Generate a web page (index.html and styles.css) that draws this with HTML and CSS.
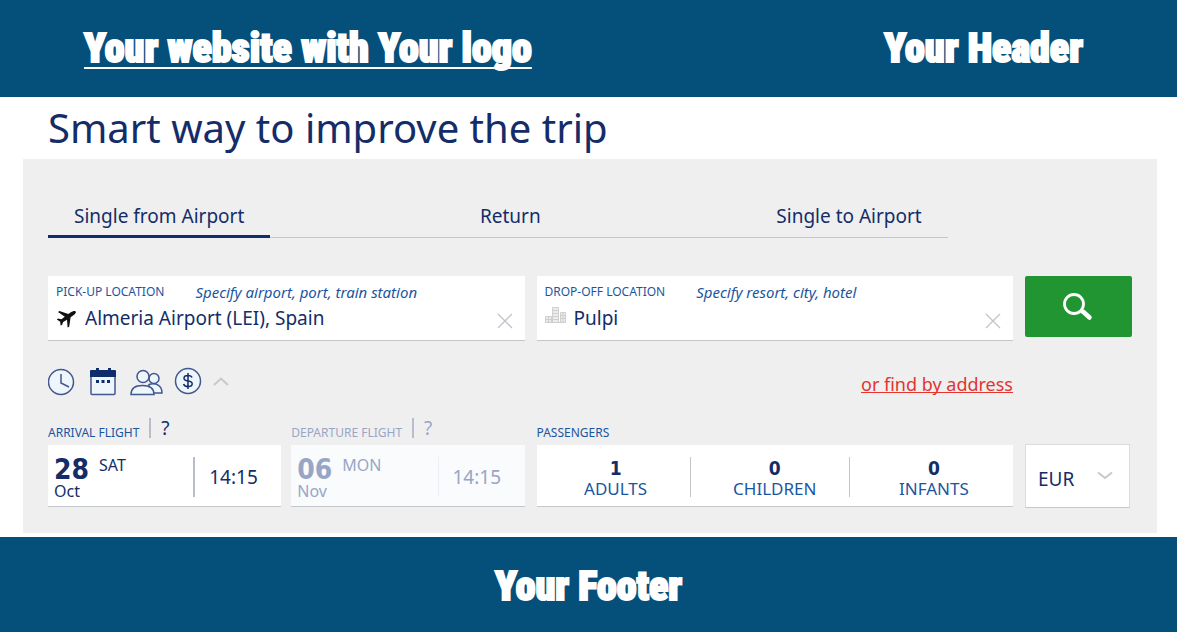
FILE: index.html
```html
<!DOCTYPE html>
<html lang="en">

<head>
    <meta charset="utf-8">
    <meta name="viewport" content="width=device-width, initial-scale=1.0">
    <title>Smart way to improve the trip</title>
    <link rel="stylesheet" href="styles.css">
</head>

<body>
    <header class="site-header">
        <a href="#" class="brand">Your website with Your logo</a>
        <span class="brand">Your Header</span>
    </header>

    <main>
        <h1>Smart way to improve the trip</h1>

        <form class="search">
            <!-- Trip type -->
            <div class="tabs">
                <button type="button" class="tab active">Single from Airport</button>
                <button type="button" class="tab">Return</button>
                <button type="button" class="tab">Single to Airport</button>
            </div>

            <!-- Locations -->
            <div class="row">
                <div class="field">
                    <div class="field-head">
                        <label for="pickup" class="caption">PICK-UP LOCATION</label>
                        <span class="hint">Specify airport, port, train station</span>
                    </div>
                    <div class="field-body">
                        <svg class="place" width="22" height="20" viewBox="0 0 22 20">
                            <path fill="#111" d="M19.500 3.200C18.300 2.400 16.500 3.200 14.900 4.300L12.300 6 3.500 3 2 4 8.800 8.700 5.400 11.300 2 10.500.800 11.500 4.200 13.700 4.600 17.500 6 17 7.200 14 11 11.800 11.600 19.500 13.200 18.800 14.600 9.300 17.800 7C19.500 5.800 20.500 4.200 19.500 3.200Z" />
                        </svg>
                        <input type="text" id="pickup" value="Almeria Airport (LEI), Spain">
                        <button type="button" class="clear" aria-label="Clear">
                            <svg width="16" height="16" viewBox="0 0 16 16">
                                <path stroke="#bfc4ca" stroke-width="1.300" d="M1 1 15 15M15 1 1 15" />
                            </svg>
                        </button>
                    </div>
                </div>

                <div class="field">
                    <div class="field-head">
                        <label for="dropoff" class="caption">DROP-OFF LOCATION</label>
                        <span class="hint">Specify resort, city, hotel</span>
                    </div>
                    <div class="field-body">
                        <svg class="place" width="22" height="20" viewBox="0 0 22 20">
                            <path fill="#ececec" stroke="#cfcfcf" d="M.500 8.500h6v6h-6zM7.500-.500h6v15h-6zM15.500 4.500h5v10h-5z" />
                            <path stroke="#cfcfcf" d="M1 11.500h5M3.500 9v5M8 2.500h5M8 5.500h5M8 8.500h5M8 11.500h5M16 7.500h4M16 10.500h4M18 5v9M0 14.500h21" />
                        </svg>
                        <input type="text" id="dropoff" value="Pulpi">
                        <button type="button" class="clear" aria-label="Clear">
                            <svg width="16" height="16" viewBox="0 0 16 16">
                                <path stroke="#bfc4ca" stroke-width="1.300" d="M1 1 15 15M15 1 1 15" />
                            </svg>
                        </button>
                    </div>
                </div>

                <button type="submit" class="go" aria-label="Search">
                    <svg width="32" height="28" viewBox="0 0 32 28" fill="none" stroke="#fff">
                        <circle cx="11" cy="11" r="9.500" stroke-width="2.800" />
                        <path stroke-width="4.500" stroke-linecap="round" d="M20.500 19 26.500 24.500" />
                        <path stroke-width="2.800" d="M17 17 20 20" />
                    </svg>
                </button>
            </div>

            <!-- Details toggle and address link -->
            <div class="row tools">
                <button type="button" class="details" aria-label="Details">
                    <svg width="184" height="30" viewBox="0 0 184 30" fill="none" stroke="#41578e" stroke-width="1.500">
                        <circle cx="13" cy="15" r="12.500" fill="#eef5fb" />
                        <path d="M13 7v9l8 4" />
                        <path fill="#eef5fb" d="M43 5h24v21.500q0 1-1 1h-22q-1 0-1-1z" />
                        <path fill="#0f2d6b" stroke="none" d="M42 4q0-1 1-1h5V1h3v2h9V1h3v2h4q1 0 1 1v6H42zM48 13h3v3h-3zM53.500 13h3v3h-3zM59 13h3v3h-3z" />
                        <g fill="#eef5fb">
                            <path d="M101 17.500c7-2 13 1 13 8.500h-13z" />
                            <circle cx="106" cy="11.500" r="5" />
                            <path d="M83 27.500c0-6 4-9 11.500-9s11.500 3 11.500 9z" />
                            <circle cx="95" cy="9.500" r="6" />
                            <circle cx="140" cy="14" r="12.500" />
                        </g>
                        <path stroke="#0f2d6b" d="M144 10.500c-.500-1.500-2-2-4-2-2.500 0-4 1-4 2.700 0 4 8.200 1.500 8.200 5.500 0 1.800-1.700 2.800-4.200 2.800-2.400 0-4-.800-4.400-2.500M140 6v16" />
                        <path stroke="#c8c8c8" stroke-width="2" d="M166 18 173 11.500 180 18" />
                    </svg>
                </button>
                <a href="#" class="address">or find by address</a>
            </div>

            <!-- Dates, passengers, currency -->
            <div class="row">
                <div class="flights">
                    <div>
                        <div class="legend">
                            <span class="caption">ARRIVAL FLIGHT</span>
                            <button type="button" class="help">?</button>
                        </div>
                        <div class="box">
                            <button type="button" class="date">
                                <b>28</b><span>SAT</span>
                                <span class="month">Oct</span>
                            </button>
                            <input type="text" class="time" value="14:15" aria-label="Arrival time">
                        </div>
                    </div>
                    <div class="off">
                        <div class="legend">
                            <span class="caption">DEPARTURE FLIGHT</span>
                            <button type="button" class="help">?</button>
                        </div>
                        <div class="box">
                            <button type="button" class="date" disabled>
                                <b>06</b><span>MON</span>
                                <span class="month">Nov</span>
                            </button>
                            <input type="text" class="time" value="14:15" aria-label="Departure time" disabled>
                        </div>
                    </div>
                </div>

                <div>
                    <div class="legend">
                        <span class="caption">PASSENGERS</span>
                    </div>
                    <div class="box">
                        <div class="count">
                            <input type="text" id="adults" value="1">
                            <label for="adults">ADULTS</label>
                        </div>
                        <div class="count">
                            <input type="text" id="children" value="0">
                            <label for="children">CHILDREN</label>
                        </div>
                        <div class="count">
                            <input type="text" id="infants" value="0">
                            <label for="infants">INFANTS</label>
                        </div>
                    </div>
                </div>

                <div class="currency">
                    <select aria-label="Currency">
                        <option>EUR</option>
                        <option>USD</option>
                        <option>GBP</option>
                    </select>
                    <svg width="18" height="10" viewBox="0 0 18 10" fill="none">
                        <path stroke="#c8c8c8" stroke-width="2" d="M2 1.500 9 7 16 1.500" />
                    </svg>
                </div>
            </div>
        </form>
    </main>

    <footer class="site-footer">
        <span class="brand">Your Footer</span>
    </footer>
</body>

</html>
```

FILE: styles.css
```css
* {
    box-sizing: border-box;
}

body {
    margin: 0;
    background-color: #fff;
    color: #142d69;
    font-family: Tahoma, "Noto Sans", sans-serif;
    font-size: 19px;
}

button,
input,
select {
    margin: 0;
    padding: 0;
    border: none;
    border-radius: 0;
    background: none;
    color: inherit;
    font: inherit;
}

button {
    cursor: pointer;
}

svg {
    display: block;
    flex: none;
}

/* HEADER AND FOOTER */

.site-header,
.site-footer {
    display: flex;
    align-items: center;
    background-color: #054f7b;
}

.site-header {
    justify-content: space-between;
    height: 97px;
    padding: 0 94px 0 84px;
}

.site-footer {
    justify-content: center;
    height: 95px;
    margin-top: 4px;
    padding-top: 5px;
}

.brand {
    color: #fff;
    font-family: Impact, "Roboto Condensed", "Liberation Sans", sans-serif;
    font-size: 40px;
    font-weight: 900;
    line-height: 56px;
    -webkit-text-stroke: 2px #fff;
}

a.brand {
    text-decoration-thickness: 2px;
    text-underline-offset: 5px;
    text-decoration-skip-ink: none;
}

/* SEARCH FORM */

h1 {
    margin: 0 48px;
    font-size: 40px;
    font-weight: normal;
    line-height: 62px;
}

.search {
    margin: 0 20px 0 23px;
    padding: 36px 25px 25px;
    background-color: #efefef;
}

.tabs {
    display: flex;
    justify-content: space-between;
    width: 83%;
    margin-bottom: 38px;
    border-bottom: 1px solid #c3c7ca;
}

.tab {
    height: 43px;
    margin-bottom: -1px;
    padding: 2px 26px 0;
    border-bottom: 3px solid transparent;
}

.tab.active {
    border-color: #0f2d6b;
}

.row {
    display: grid;
    grid-template-columns: 1fr 1fr 107px;
    align-items: start;
    gap: 12px;
}

.field {
    padding: 6px 8px;
    border-bottom: 1px solid #c3c7ca;
    background-color: #fff;
}

.field-head {
    display: flex;
    align-items: center;
    gap: 31px;
    height: 20px;
}

.caption {
    color: #1a56a0;
    font-size: 12px;
    line-height: 20px;
}

.hint {
    color: #1a56a0;
    font-size: 15px;
    font-style: italic;
    line-height: 20px;
}

.field-body {
    display: flex;
    align-items: center;
    height: 32px;
}

.place {
    overflow: visible;
    margin-right: 7px;
}

.field-body input {
    flex: 1;
    min-width: 0;
    height: 28px;
}

.clear {
    padding: 5px 4px 0;
}

.go {
    display: grid;
    place-items: center;
    height: 61px;
    border-radius: 2px;
    background-color: #219532;
}

.tools {
    padding: 26px 0 20px;
}

.details {
    justify-self: start;
}

.address {
    justify-self: end;
    padding-top: 3px;
    color: #e3342f;
    font-size: 18px;
    line-height: 28px;
    text-decoration-skip-ink: none;
}

/* DATES AND PASSENGERS */

.flights {
    display: grid;
    grid-template-columns: 1fr 1fr;
    gap: 10px;
}

.legend {
    display: flex;
    align-items: end;
    gap: 10px;
    height: 27px;
    padding-bottom: 2px;
}

.help {
    align-self: start;
    height: 20px;
    padding-left: 10px;
    border-left: 2px solid #b9bdcb;
    line-height: 20px;
}

.box {
    display: flex;
    align-items: center;
    height: 62px;
    padding-top: 2px;
    border-bottom: 1px solid #c3c7ca;
    background-color: #fff;
}

.date {
    display: grid;
    grid-template-columns: auto 1fr;
    column-gap: 10px;
    flex: 1;
    height: 40px;
    padding-left: 6px;
    border-right: 2px solid #b9bdcb;
    font-size: 16px;
    line-height: 16px;
    text-align: left;
}

.date b {
    font-family: Tahoma, "DejaVu Sans Condensed", sans-serif;
    font-size: 28px;
    line-height: 26px;
}

.month {
    grid-column: 1 / 3;
}

.time {
    width: 86px;
    padding-left: 14px;
}

.off .box {
    background-color: #f9fbfd;
}

.off .caption,
.off .help,
.off .date,
.off .time {
    color: #98a6c6;
}

.off .date {
    border-right: 1px solid #eceff5;
}

.count {
    display: flex;
    flex: 1;
    flex-direction: column;
    align-items: center;
    height: 40px;
    margin-right: 5px;
    padding-left: 5px;
    border-right: 1px solid #c3c7ca;
    color: #1a56a0;
    font-size: 17px;
}

.count:last-child {
    border-right: none;
}

.count input {
    flex: none;
    width: 100%;
    height: 22px;
    color: #142d69;
    font-family: Tahoma, "DejaVu Sans Condensed", sans-serif;
    font-size: 19px;
    font-weight: bold;
    text-align: center;
}

.count label {
    line-height: 20px;
}

.currency {
    display: grid;
    align-items: center;
    margin: 26px 2px 0 0;
    border: 1px solid #dcdcdc;
    border-bottom-color: #c3c7ca;
    background-color: #fff;
}

.currency select,
.currency svg {
    grid-area: 1 / 1;
}

.currency select {
    height: 62px;
    padding: 6px 12px 0;
    appearance: none;
}

.currency svg {
    justify-self: end;
    margin-right: 15px;
    pointer-events: none;
}
```
